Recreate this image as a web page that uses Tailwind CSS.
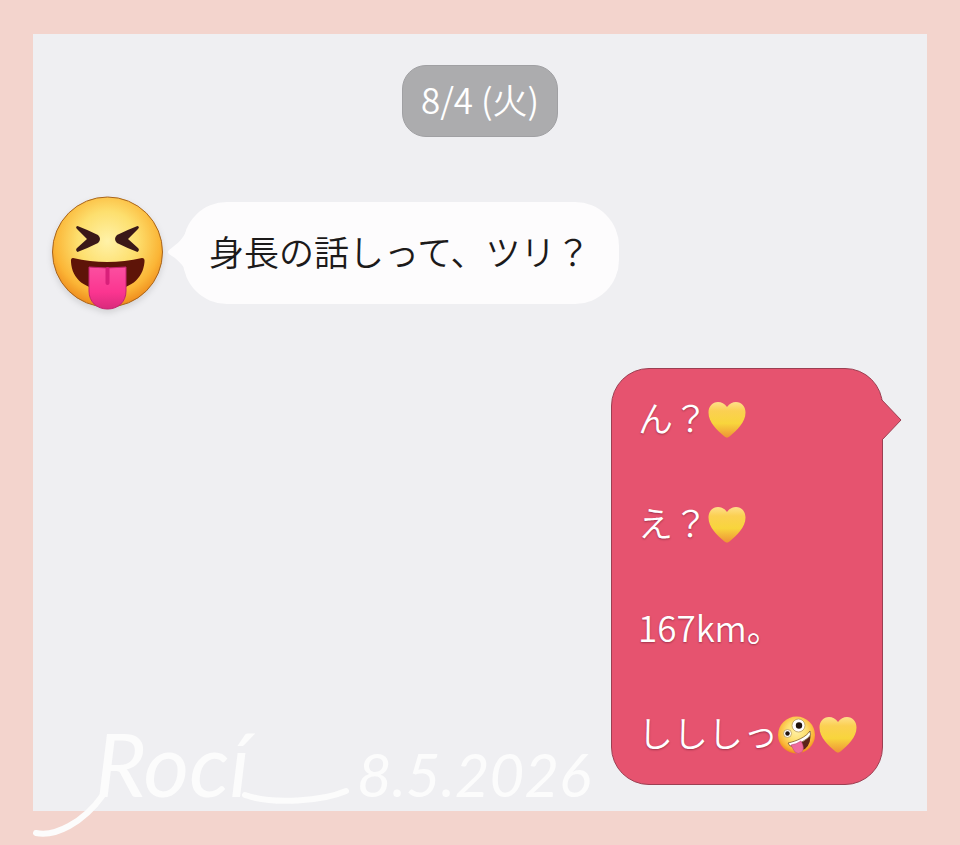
<!doctype html>
<html lang="ja">
<head>
  <meta charset="UTF-8">
  <meta name="viewport" content="width=device-width, initial-scale=1.0">
  <title>Chat</title>
  <script src="https://cdn.jsdelivr.net/npm/@tailwindcss/browser@4"></script>
</head>
<body class="min-h-screen bg-[#f3d4cd] px-[33px] py-[34px] font-['Noto_Sans_CJK_JP',sans-serif] font-[350]">

  <!-- shared heart icon -->
  <svg class="absolute size-0">
    <defs>
      <linearGradient id="gold" x1="0" y1="0" x2="0" y2="1">
        <stop offset="0" stop-color="#fee08a"/>
        <stop offset=".25" stop-color="#fbd052"/>
        <stop offset=".6" stop-color="#f8d53c"/>
        <stop offset="1" stop-color="#ee9336"/>
      </linearGradient>
      <symbol id="heart" viewBox="0 -6 38 44">
        <path fill="url(#gold)" d="M19 6C16.500 2.500 13.500 1 10 1C4.500 1 .5 5.500 .5 11.500C.5 21.500 9 29 16.500 35.500Q19 37.800 21.500 35.500C29 29 37.500 21.500 37.500 11.500C37.500 5.500 33.500 1 28 1C24.500 1 21.500 2.500 19 6Z"/>
      </symbol>
    </defs>
  </svg>

  <main class="relative flex flex-col bg-[#efeff2] pt-[31px] pb-[26px]">
    <div class="self-center rounded-3xl border border-[#a0a0a3] bg-[#acacae] px-[18px] pt-[7px] pb-[11px]">
      <time datetime="08-04" class="block text-[35px] leading-[52px] text-white">8/4 (火)</time>
    </div>

    <!-- received -->
    <div class="mt-[59px] flex items-center gap-5 pl-[19px]">
      <svg class="h-[114px] w-[111px] shrink-0 drop-shadow-md" viewBox="0 0 111 114" role="img" aria-label="avatar">
        <defs>
          <radialGradient id="face" cx=".5" cy=".4" r=".6">
            <stop offset="0" stop-color="#fff2a8"/>
            <stop offset=".45" stop-color="#fddf6e"/>
            <stop offset=".8" stop-color="#fbb536"/>
            <stop offset="1" stop-color="#ee8a1c"/>
          </radialGradient>
          <linearGradient id="tongue" x1="0" y1="0" x2="0" y2="1">
            <stop offset="0" stop-color="#fb4fa0"/>
            <stop offset=".6" stop-color="#fb3590"/>
            <stop offset="1" stop-color="#d92a7c"/>
          </linearGradient>
        </defs>
        <circle cx="55.500" cy="56" r="55" fill="url(#face)" stroke="#a8641c" stroke-width="1"/>
        <path fill="#3a1818" d="M25.500 30Q36 34 46 39Q50 43 46 47Q36 52 25.500 56Q23 54 25 52L35 43L25 33Q23 31 25.500 30Z"/>
        <path fill="#3a1818" d="M85.500 30Q75 34 65 39Q61 43 65 47Q75 52 85.500 56Q88 54 86 52L76 43L86 33Q88 31 85.500 30Z"/>
        <path fill="#5e1408" d="M21 62Q55 70 90 62Q93 62 92.500 66C91 83 78 94 55.500 94C33 94 20 83 19 66Q18.500 62 21 62Z"/>
        <path fill="url(#tongue)" stroke="#c52270" stroke-width="1" d="M37 71Q55 73 74 71V95C74 106 66 113 55.500 113C45 113 37 106 37 95Z"/>
        <path stroke="#d9207a" stroke-width="4" stroke-linecap="round" d="M55.500 73V87"/>
      </svg>
      <div class="relative rounded-[44px] bg-[#fdfcfd] pt-[23px] pr-7 pb-[27px] pl-[26px]">
        <svg class="absolute top-7 -left-4 h-11 w-5" viewBox="0 0 20 44">
          <path fill="#fdfcfd" d="M20 0C16 9 10 14 2 20Q0 22 2 24C10 29 16 34 20 44Z"/>
        </svg>
        <p class="text-[35px] leading-[52px] text-[#1c1a1a]">身長の話しって、ツリ？</p>
      </div>
    </div>

    <!-- sent -->
    <div class="relative mt-[58px] mr-11 flex flex-col gap-[53px] self-end rounded-[38px] border border-[#9c3f52] bg-[#e6536f] pt-[22px] pr-[25px] pb-[26px] pl-[26px] text-[35px] leading-[52px] whitespace-nowrap text-white [text-shadow:0_1px_2px_rgb(60_0_20/0.4)]">
      <svg class="absolute top-[30px] -right-5 h-[42px] w-[21px]" viewBox="0 0 21 42">
        <path fill="#e6536f" d="M0 0L20 21L0 42Z"/>
        <path fill="none" stroke="#9c3f52" d="M0 0L20 21L1 41"/>
      </svg>
      <p class="flex items-center">ん？<svg class="h-11 w-[38px]"><use href="#heart"/></svg></p>
      <p class="flex items-center">え？<svg class="h-11 w-[38px]"><use href="#heart"/></svg></p>
      <p>167km。</p>
      <p class="flex items-center">しししっ<svg class="mr-[3px] h-11 w-[38px] shrink-0" viewBox="0 -6 38 44">
          <circle cx="18.500" cy="19" r="18.500" fill="url(#face)"/>
          <path fill="#5a2418" d="M10 27C20 28 30 22 32 15Q34 27 27 33Q19 37 10 27Z"/>
          <path fill="#fff" stroke="#6b4a20" stroke-width=".7" d="M10 27C19 25 28 21 32 15Q34 19 30 22Q22 29 12 30Z"/>
          <path fill="#ee6a9d" stroke="#c94a7c" stroke-width=".6" d="M13 29Q19 28 23 25Q27 32 24 36Q20 39 17 36Q15 33 13 29Z"/>
          <circle cx="20.500" cy="9.500" r="6.500" fill="#fff" stroke="#b79a55" stroke-width=".8"/>
          <circle cx="21" cy="9.500" r="3.200" fill="#20140e"/>
          <circle cx="9.500" cy="17.500" r="4" fill="#fff" stroke="#b79a55" stroke-width=".8"/>
          <circle cx="9.500" cy="17.500" r="2.200" fill="#20140e"/>
        </svg><svg class="h-11 w-[38px] shrink-0"><use href="#heart"/></svg></p>
    </div>

    <!-- signature with its pen flourishes -->
    <div class="absolute -bottom-[34px] left-0 flex items-baseline pb-[38px] pl-[62px] font-['Lato',sans-serif] leading-none font-normal text-[#fcfcfc] italic">
      <svg class="absolute bottom-0 left-0 h-[110px] w-[340px]" viewBox="0 0 340 110" fill="none" stroke="#fcfcfc" stroke-width="6" stroke-linecap="round">
        <path d="M3 98C22 102 50 88 70 60"/>
        <path d="M212 60C240 70 290 66 313 56"/>
      </svg>
      <span class="w-[262px] text-[88px]">Rocí</span>
      <span class="text-[60px]">8.5.2026</span>
    </div>
  </main>
</body>
</html>
